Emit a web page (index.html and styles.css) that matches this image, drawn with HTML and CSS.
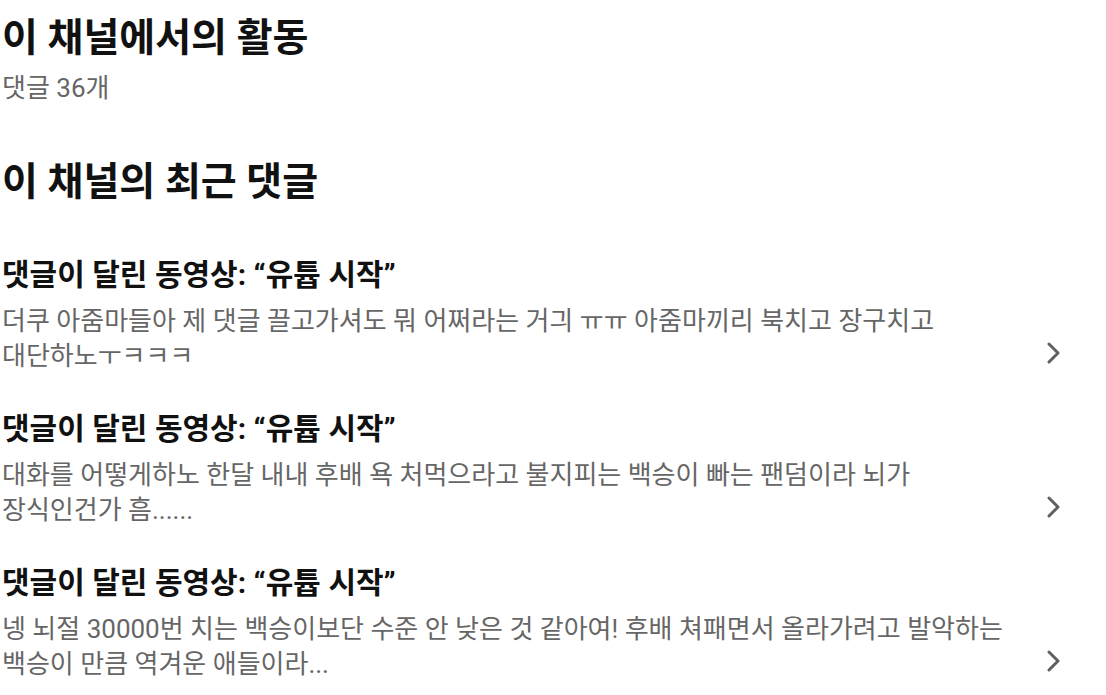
FILE: index.html
```html
<!DOCTYPE html>
<html lang="ko">
<head>
  <meta charset="UTF-8">
  <meta name="viewport" content="width=device-width, initial-scale=1.0">
  <title>채널 활동</title>
  <link rel="stylesheet" href="styles.css">
</head>
<body>
  <div class="page">
    <section class="activity">
      <h1>이 채널에서의 활동</h1>
      <p class="count">댓글 36개</p>
    </section>

    <section class="recent">
      <h2>이 채널의 최근 댓글</h2>

      <ul class="comment-list">
        <li class="comment">
          <div class="comment-body">
            <h3>댓글이 달린 동영상: “유튭 시작”</h3>
            <p>더쿠 아줌마들아 제 댓글 끌고가셔도 뭐 어쩌라는 거긔 ㅠㅠ 아줌마끼리 북치고 장구치고 대단하노ㅜㅋㅋㅋ</p>
          </div>
          <svg class="chevron" viewBox="0 0 16 22" width="16" height="22"><path d="M3 2l9 9-9 9"/></svg>
        </li>
        <li class="comment">
          <div class="comment-body">
            <h3>댓글이 달린 동영상: “유튭 시작”</h3>
            <p>대화를 어떻게하노 한달 내내 후배 욕 처먹으라고 불지피는 백승이 빠는 팬덤이라 뇌가 장식인건가 흠......</p>
          </div>
          <svg class="chevron" viewBox="0 0 16 22" width="16" height="22"><path d="M3 2l9 9-9 9"/></svg>
        </li>
        <li class="comment">
          <div class="comment-body">
            <h3>댓글이 달린 동영상: “유튭 시작”</h3>
            <p>넹 뇌절 30000번 치는 백승이보단 수준 안 낮은 것 같아여! 후배 쳐패면서 올라가려고 발악하는 백승이 만큼 역겨운 애들이라...</p>
          </div>
          <svg class="chevron" viewBox="0 0 16 22" width="16" height="22"><path d="M3 2l9 9-9 9"/></svg>
        </li>
      </ul>
    </section>
  </div>
</body>
</html>
```

FILE: styles.css
```css
body {
  margin: 0;
  background-color: #ffffff;
  color: #111111;
  font-family: Roboto, "Noto Sans CJK KR", sans-serif;
  word-break: keep-all;
}
.page {
  padding: 10px 0 0 2px;
}
h1, h2 {
  margin: 0;
  font-size: 39px;
  font-weight: bold;
  line-height: 56px;
}
.count {
  margin: 3px 0 0;
  font-size: 26px;
  line-height: 38px;
  color: #666666;
}
.recent {
  margin-top: 47px;
}
.comment-list {
  list-style: none;
  margin: 44px 0 0;
  padding: 0;
}
.comment {
  display: flex;
  align-items: center;
  height: 154px;
}
.comment-body {
  width: 1022px;
  align-self: flex-start;
}
.comment h3 {
  margin: 0;
  font-size: 30px;
  font-weight: bold;
  line-height: 42px;
}
.comment p {
  margin: 8px 0 0;
  font-size: 26px;
  line-height: 35px;
  color: #666666;
}
.chevron {
  margin: 44px 0 0 22px;
  fill: none;
  stroke: #606060;
  stroke-width: 3;
  stroke-linecap: round;
  stroke-linejoin: round;
}
```
